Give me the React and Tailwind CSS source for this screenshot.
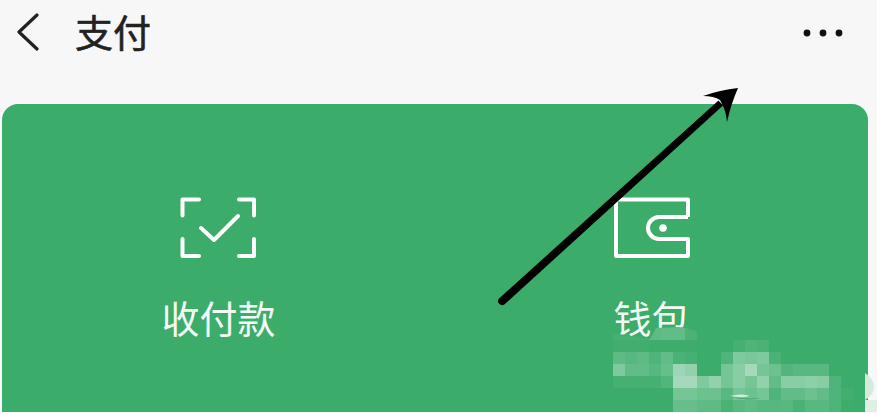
import React from 'react';

const green = '#3bac6a';

// white opacity per mosaic cell, each row starts at x=613 and cells are 12px wide
const mosaicRows = [
  { y: 340, cells: [0.03, 0.03, 0.03, 0.02, 0.02, 0.02, 0.02, 0, 0, 0, 0.06, 0.1, 0.08] },
  { y: 352, cells: [0.18, 0.14, 0.18, 0.1, 0.2, 0.08, 0.06, 0, 0, 0.1, 0.35, 0.32, 0.35, 0.08] },
  { y: 364, cells: [0.35, 0.2, 0.2, 0.14, 0.22, 0.5, 0.45, 0, 0, 0.3, 0.4, 0.55, 0.3, 0.25, 0.12, 0.15, 0.15, 0.15] },
  { y: 376, cells: [0.05, 0.05, 0.05, 0.05, 0.12, 0.55, 0.55, 0.35, 0.45, 0.3, 0.4, 0.3, 0.45, 0.2, 0.4, 0.4, 0.42, 0.4, 0.1] },
  { y: 388, cells: [0, 0, 0, 0, 0, 0.3, 0.3, 0.25, 0.25, 0.15, 0.3, 0.25, 0.3, 0.1, 0.2, 0.2, 0.25, 0.2, 0.1, 0.04] },
  { y: 400, cells: [0, 0, 0, 0, 0, 0.22, 0.22, 0.18, 0.18, 0.08, 0.15, 0.18, 0.14, 0.14, 0.15, 0.08, 0.15, 0.15, 0.1, 0.02] },
];

const ScanIcon = () => (
  <svg width="80" height="64" viewBox="0 0 80 64" fill="none" stroke="white" strokeWidth="4" strokeLinecap="round" strokeLinejoin="round">
    <path d="M20 3.5H3.5v16" />
    <path d="M60 3.5h15v16" />
    <path d="M3.5 43v17H20" />
    <path d="M75 43v17H60" />
    <path d="M22 32l13 12 24-24" />
  </svg>
);

const WalletIcon = () => (
  <svg width="80" height="64" viewBox="0 0 80 64" fill="none" stroke="white" strokeWidth="4" strokeLinejoin="round">
    <path d="M76 21V3.5H4V60h72V43H47a11 11 0 0 1 0-22H76" />
    <circle cx="51" cy="32" r="3.8" fill="white" stroke="none" />
  </svg>
);

// arrow and mosaic lie on top of the screenshot content
const Overlay = () => (
  <svg className="absolute inset-0" width="877" height="413" viewBox="0 0 877 413">
    <defs>
      <clipPath id="topRow">
        <path d="M613 333L650 339L656 328L680 327L697 331V340H613Z" />
      </clipPath>
    </defs>
    <path d="M613 333L650 339L656 328L680 327L697 331V412H613Z" fill={green} />
    <g clipPath="url(#topRow)">
      {[0.06, 0.06, 0.06, 0.18, 0.2, 0.2, 0.08].map((o, i) => (
        <rect key={i} x={613 + i * 12} y="326" width="12" height="14" fill="white" fillOpacity={o} />
      ))}
    </g>
    {mosaicRows.map((row) =>
      row.cells.map((o, i) => (
        <rect key={`${row.y}-${i}`} x={613 + i * 12} y={row.y} width="12" height="12" fill="white" fillOpacity={o} />
      ))
    )}
    <path d="M730 396Q742 393 750 396Q742 398 730 396Z" fill="#d8efe0" />
    <path d="M732 397Q745 400 762 398Q745 401 732 397Z" fill="#2f8f58" />
    <path d="M865 373Q874 379 874 387Q874 395 865 400Z" fill="#d6eade" />
    <rect x="865" y="400" width="12" height="12" fill="#e0efe6" />
    <path d="M499 298.5L718.5 100.500L723 105.500L505.500 303.500A3.5 3.5 0 0 1 499 298.5Z" fill="black" />
    <path d="M738 88Q720 90 703 96Q714 96 720 100L723 106Q726 112 727 122Q731 104 738 88Z" fill="black" />
  </svg>
);

export default function App() {
  return (
    <div className="relative w-[877px] h-[413px] overflow-hidden bg-[#f7f7f8] font-['Noto_Sans_CJK_SC',sans-serif]">
      <div className="flex items-center h-[66px] pl-[17px] pr-[32px]">
        <svg className="-mt-[2px]" width="22" height="38" viewBox="0 0 22 38" fill="none" stroke="#222" strokeWidth="3.2" strokeLinecap="round" strokeLinejoin="round">
          <path d="M20 2L2 19l18 17" />
        </svg>
        <span className="ml-[36px] -mt-[4px] text-[38px] leading-none text-[#222] [-webkit-text-stroke:0.6px_#222]">支付</span>
        <svg className="ml-auto" width="42" height="8" viewBox="0 0 42 8" fill="#111">
          <circle cx="4" cy="4" r="3.4" />
          <circle cx="20" cy="4" r="3.4" />
          <circle cx="36" cy="4" r="3.4" />
        </svg>
      </div>

      <div className="mt-[38px] ml-[2px] w-[866px] h-[308px] rounded-t-[16px] bg-[#3bac6a] grid grid-cols-2 pt-[92px]">
        <div className="flex flex-col items-center">
          <ScanIcon />
          <span className="mt-[29px] text-[38px] leading-[56px] text-[#f3faf6]">收付款</span>
        </div>
        <div className="flex flex-col items-center">
          <WalletIcon />
          <span className="mt-[29px] text-[38px] leading-[56px] text-[#f3faf6]">钱包</span>
        </div>
      </div>

      <Overlay />
    </div>
  );
}
